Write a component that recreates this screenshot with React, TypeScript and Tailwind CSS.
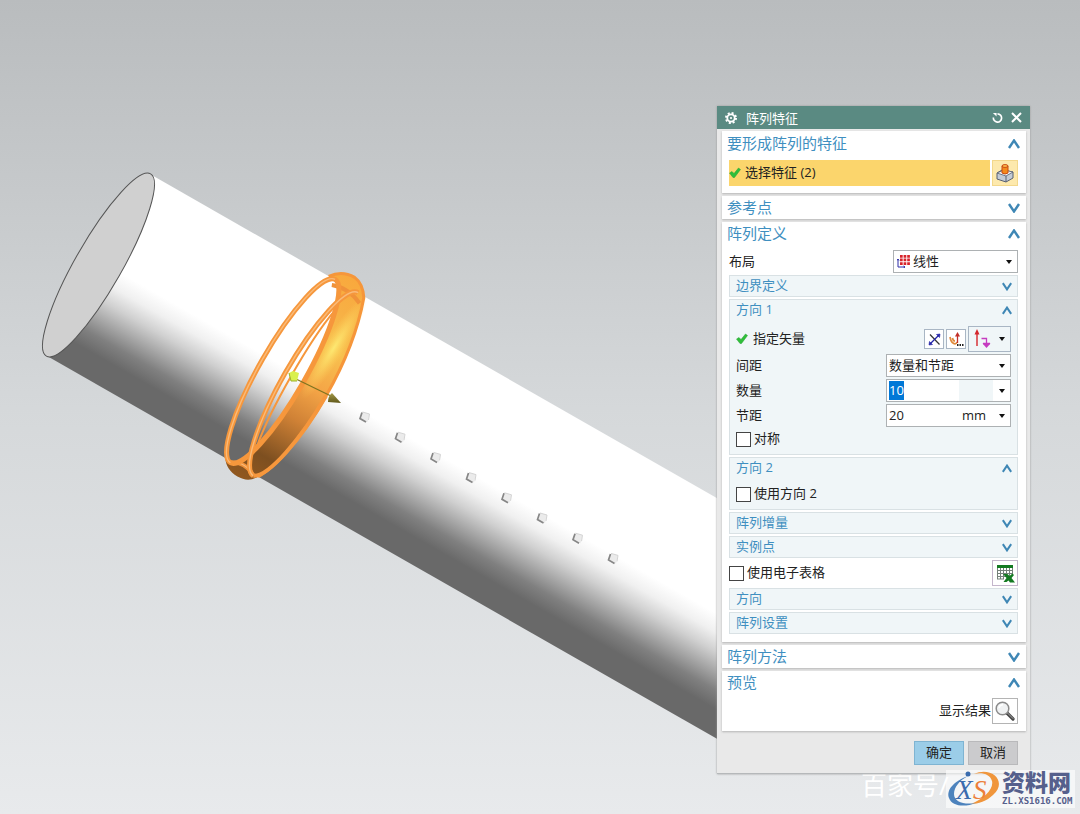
import { useEffect, useRef, useState } from "react";
import type { ReactNode } from "react";

function Chevron({ open, small }: { open: boolean; small?: boolean }) {
  return (
    <svg
      className={small ? "w-[10px] h-[9px]" : "w-3 h-[10px]"}
      viewBox="0 0 12 10"
      fill="none"
      stroke="#3f87b5"
      strokeWidth="2.4"
    >
      <path d={open ? "M1 9 L6 1.5 L11 9" : "M1 1 L6 8.5 L11 1"} />
    </svg>
  );
}

function Arrow() {
  return (
    <svg className="w-[6px] h-[4px]" viewBox="0 0 6 4">
      <path d="M0 0 H6 L3 4 Z" fill="#111" />
    </svg>
  );
}

function Check() {
  return (
    <svg className="w-[12px] h-[12px]" viewBox="0 0 12 12">
      <path d="M.5 6 L3 4.5 L5 6.5 L9.5 1 L11.5 2.5 L5.5 10.5 L4 10.5 Z" fill="#2fbf3a" stroke="#25a030" strokeWidth=".5" />
    </svg>
  );
}

function Card({ title, open, className, children }: { title: string; open: boolean; className?: string; children?: ReactNode }) {
  return (
    <section className={"bg-white shadow-[0_1px_2px_#b4b4b4] pl-[7px] pr-2 " + (className || "")}>
      <h2>
        <button className="flex items-center justify-between w-full h-[23px] text-[15px] text-[#3f8fc0]">
          <span className="-ml-[2px]">{title}</span>
          <span className="-mr-[2px]">
            <Chevron open={open} />
          </span>
        </button>
      </h2>
      {children}
    </section>
  );
}

function SubGroup({ title, children }: { title: string; children?: ReactNode }) {
  return (
    <section className="bg-[#f0f6f8] border border-[#d9e1e4] px-[6px]">
      <h3>
        <button className="flex items-center justify-between w-full h-5 text-[13px] text-[#3f8fc0]">
          {title}
          <span className="-mr-px">
            <Chevron open={!!children} small />
          </span>
        </button>
      </h3>
      {children && <div className="flex flex-col gap-[2px] pt-[6px] pb-[5px]">{children}</div>}
    </section>
  );
}

function CheckRow({ id, label }: { id: string; label: string }) {
  return (
    <div className="flex items-center gap-[3px] h-5">
      <input
        id={id}
        type="checkbox"
        className="appearance-none w-[15px] h-[15px] border border-[#444] bg-white checked:bg-[#3f8fc0]"
      />
      <label htmlFor={id}>{label}</label>
    </div>
  );
}

function GearIcon() {
  return (
    <svg className="w-3 h-3" viewBox="0 0 12 12" fill="none" stroke="#fff">
      <circle cx="6" cy="6" r="5" strokeWidth="2" strokeDasharray="2 1.93" />
      <circle cx="6" cy="6" r="3.7" strokeWidth="1.8" />
      <circle cx="6" cy="6" r="1.1" fill="#fff" stroke="none" />
    </svg>
  );
}

function FeatureIcon() {
  return (
    <svg className="w-[18px] h-[19px]" viewBox="0 0 18 19">
      <path d="M1 9 L6 6 L17 8 V14 L10 18 L1 15 Z" fill="#c3cbd6" stroke="#586070" />
      <path d="M1 9 L10 12 L17 8 L8 6 Z" fill="#f0f3f7" stroke="#586070" strokeWidth=".8" />
      <path d="M10 12 V18" stroke="#586070" />
      <path d="M6 2 V9 Q9 11 12 9 V2 Z" fill="#f48a1c" stroke="#c84a12" />
      <ellipse cx="9" cy="2" rx="3" ry="1.4" fill="#ffc04d" stroke="#c84a12" />
    </svg>
  );
}

function LinearIcon() {
  return (
    <svg className="w-[13px] h-[13px]" viewBox="0 0 13 13">
      <g fill="#d8232a">
        <path d="M3 0h2.7v2.7H3z M6.6 0h2.7v2.7H6.6z M10.2 0h2.7v2.7h-2.7z" />
        <path d="M3 3.6h2.7v2.7H3z M6.6 3.6h2.7v2.7H6.6z M10.2 3.6h2.7v2.7h-2.7z" />
        <path d="M3 7.2h2.7v2.7H3z M6.6 7.2h2.7v2.7H6.6z M10.2 7.2h2.7v2.7h-2.7z" />
      </g>
      <path d="M1 4 V12 H8 M0 5.5 L1 4 L2 5.5 M6.5 11 L8 12 L6.5 13" fill="none" stroke="#2e2ea8" />
    </svg>
  );
}

function ReverseIcon() {
  return (
    <svg className="w-[13px] h-[13px]" viewBox="0 0 13 13">
      <path d="M2 1.5 L11.5 11.5" stroke="#333" strokeWidth="1.2" />
      <path d="M3 10 L10 3" stroke="#2222a8" strokeWidth="1.3" />
      <path d="M12 1 L11.5 4.5 L8.5 1.5 Z M1 12 L1.5 8.5 L4.5 11.5 Z" fill="#2222a8" stroke="#2222a8" strokeWidth=".6" />
    </svg>
  );
}

function VectorDialogIcon() {
  return (
    <svg className="w-[15px] h-[15px]" viewBox="0 0 15 15" fill="none">
      <path d="M1 5 Q2 10 4 11 Q7 13 8 10 M3.5 6 Q4 9 6 9" stroke="#e08a3c" strokeWidth="1.7" />
      <path d="M8.5 11 V4" stroke="#c22f28" strokeWidth="1.3" />
      <path d="M8.5 0 L11 4.5 H6 Z" fill="#c22f28" />
      <path d="M8 13h1.5 M10.5 13H12 M13 13h1.5" stroke="#222" strokeWidth="1.8" />
    </svg>
  );
}

function AxisIcon() {
  return (
    <svg className="w-[18px] h-[20px]" viewBox="0 0 18 20" fill="none">
      <path d="M4 17 V4" stroke="#d4262c" strokeWidth="1.4" />
      <path d="M4 0 L6.5 5.5 H1.5 Z" fill="#d4262c" />
      <path d="M8.5 9.5 H13.5 V15 M10 14.5 H17" stroke="#c53cc0" strokeWidth="1.3" />
      <path d="M9.5 14.5 H17.5 L13.5 19 Z" fill="#c53cc0" />
    </svg>
  );
}

function SheetIcon() {
  return (
    <svg className="w-[19px] h-[19px]" viewBox="0 0 19 19">
      <path d="M1 1 H17 V14 H1 Z" fill="#fff" />
      <path d="M1.5 4 V15 M4.5 4 V15 M7.5 4 V15 M10.5 4 V12 M13.5 4 V12 M16.5 4 V12 M1 6.5 H17 M1 9.5 H17 M1 12.5 H10 M1 15 H8" stroke="#75817a" />
      <path d="M1 1 H17 V4 H1 Z" fill="#147a22" />
      <path d="M7 10 H11.5 L13.5 12 L16.5 9.5 L18 11 L15.5 14 L19 18.5 H14 L12.5 16.5 L10.5 18 H7.5 L10.5 14 Z" fill="#147a22" />
    </svg>
  );
}

function MagnifierIcon() {
  return (
    <svg className="w-[20px] h-[20px]" viewBox="0 0 20 20">
      <path d="M12 12 L18 18" stroke="#444" strokeWidth="3.2" strokeLinecap="round" />
      <path d="M12.5 12 L18 17.5" stroke="#aaa" strokeLinecap="round" />
      <circle cx="7.5" cy="7.5" r="6.3" fill="#f0f2f3" stroke="#8b8b8b" strokeWidth="1.5" />
      <path d="M4 7 Q4.5 4 8 3.8" fill="none" stroke="#fff" strokeWidth="1.5" />
    </svg>
  );
}

const instances = [0, 1, 2, 3, 4, 5, 6, 7];

function Scene() {
  return (
    <svg className="absolute left-0 top-0 w-[1080px] h-[814px]" viewBox="0 0 1080 814" fill="none">
      <defs>
        <linearGradient id="body" x1="0" y1="0" x2="0" y2="1">
          <stop offset="0" stopColor="#fff" />
          <stop offset=".48" stopColor="#fff" />
          <stop offset=".56" stopColor="#f0f0f0" />
          <stop offset=".64" stopColor="#d0d0d0" />
          <stop offset=".72" stopColor="#a8a8a8" />
          <stop offset=".8" stopColor="#808080" />
          <stop offset=".88" stopColor="#696969" />
          <stop offset="1" stopColor="#696969" />
        </linearGradient>
        <linearGradient id="ring" gradientUnits="userSpaceOnUse" x1="0" y1="-119" x2="0" y2="119">
          <stop offset="0" stopColor="#f9a83c" />
          <stop offset=".16" stopColor="#f7b045" />
          <stop offset=".32" stopColor="#f8c04e" />
          <stop offset=".5" stopColor="#f4a446" />
          <stop offset=".65" stopColor="#d08236" />
          <stop offset=".85" stopColor="#7d4f20" />
          <stop offset="1" stopColor="#94591f" />
        </linearGradient>
        <radialGradient id="glow">
          <stop offset="0" stopColor="#fff27a" stopOpacity=".8" />
          <stop offset="1" stopColor="#fdd75c" stopOpacity="0" />
        </radialGradient>
        <linearGradient id="cone" x1="0" y1="0" x2="0" y2="1">
          <stop offset="0" stopColor="#a59a4a" />
          <stop offset="1" stopColor="#5f5718" />
        </linearGradient>
      </defs>

      {/* shaft */}
      <g transform="translate(98.5 265) rotate(29.75)">
        <rect x="0" y="-104.5" width="820" height="209" fill="url(#body)" />
        <ellipse rx="23.4" ry="105" fill="#d0d0d0" stroke="#555" />
      </g>

      {/* selected ring */}
      <g transform="translate(294 377.5) rotate(29.75)">
        <path
          d="M-20 -105 C-15 -112 -7 -117 3 -117 C12 -116 17 -110 21 -104 C33 -70 37 -35 37 0 C37 40 30 85 18 104 C14 111 8 114 0 114 C-10 114 -18 109 -21 101 L-13 105.5 A23.4 105.5 0 0 0 -13 -105.5 Z"
          fill="url(#ring)"
        />
        <ellipse cx="20" cy="-46" rx="11" ry="60" transform="rotate(2 20 -46)" fill="url(#glow)" />
        <path
          d="M-20 -105 C-15 -112 -7 -117 3 -117 C12 -116 17 -110 21 -104 C33 -70 37 -35 37 0 C37 40 30 85 18 104"
          stroke="#f6963a"
          strokeWidth="3"
        />
        <path d="M-13 -99 Q2 -105 20 -97 M-13 105 Q0 97 13 105" stroke="#f0923a" strokeWidth="4" />
        <path d="M-13 105 Q0 97 13 105" stroke="#f9bb7a" />
        <ellipse cx="-13" rx="23.4" ry="105.5" stroke="#f6973c" strokeWidth="5" />
        <path d="M-13 105.5 A23.4 105.5 0 0 1 -13 -105.5" stroke="#f9bb7a" strokeWidth="1.4" />
        <path d="M13.5 105.5 A23.4 105.5 0 0 1 13.5 -105.5" stroke="#f6973c" strokeWidth="5" />
        <path d="M13.5 105.5 A23.4 105.5 0 0 1 13.5 -105.5" stroke="#f9bb7a" strokeWidth="1.4" />
        <path d="M13.5 105.5 C27 99 36.9 50 36.9 0" stroke="#f6973c" strokeWidth="4" />
        {/* inner edge of the groove */}
        <path d="M2 78 C-5 40 -5 -40 2 -78" stroke="#f6973c" strokeWidth="2" />
      </g>

      {/* direction handle */}
      <path d="M296 379 L331 396" stroke="#7e7420" strokeWidth="1.3" />
      <path d="M341 403 L328 402 Q328 396 332 393 Z" fill="url(#cone)" />
      <path d="M289 373 L293 371 L299 373 L297 381 L291 381 Z" fill="#d9f04e" />
      <path d="M289 373 L291 381 L297 381" stroke="#9bb02c" />

      {/* pattern instances */}
      {instances.map((i) => (
        <g key={i} transform={`translate(${364.5 + i * 35.5} ${417 + i * 20.2})`}>
          <path d="M-2 -5 L5 -3 L3 5 L-4 3 Z" fill="#ebebeb" />
          <path d="M-2 -5 L5 -3 L4 3" stroke="#d4d4d4" />
          <path d="M-2.5 -4.5 L-4.5 1.5 L1.5 5" stroke="#868686" strokeWidth="1.7" />
        </g>
      ))}
    </svg>
  );
}

function SiteLogo() {
  return (
    <div className="absolute left-[946px] top-[770px] flex items-center w-[129px] h-[38px] bg-white/60">
      <svg className="w-[56px] h-[38px]" viewBox="0 0 56 38" fill="none">
        <path d="M28 4 C46 -4 62 12 47 25 C41 31 32 34 25 34 C38 29 48 19 46 11 C44 4 36 2 28 4 Z" fill="#f0963c" />
        <path d="M22 6 C8 11 0 20 3 28 C6 37 20 37 30 33 C18 35 8 32 8 24 C8 17 14 10 22 6 Z" fill="#4d83bd" />
        <circle cx="22" cy="4" r="2.5" fill="#3b6cae" />
        <text x="10" y="29" fontFamily="Liberation Serif, serif" fontStyle="italic" fontSize="27" fill="#3b6cae">X</text>
        <text x="27" y="29" fontFamily="Liberation Serif, serif" fontStyle="italic" fontSize="27" fill="#ec7f3a">S</text>
      </svg>
      <div className="text-[#56608c] font-bold whitespace-nowrap">
        <div className="text-[23px] leading-[25px] font-black">资料网</div>
        <div className="font-['DejaVu_Sans_Mono',monospace] text-[9px] leading-[13px]">ZL.XS1616.COM</div>
      </div>
    </div>
  );
}

export default function App() {
  const [count, setCount] = useState("10");
  const [pitch, setPitch] = useState("20");
  const countRef = useRef<HTMLInputElement>(null);

  useEffect(() => {
    countRef.current?.focus();
    countRef.current?.select();
  }, []);

  return (
    <main className="relative min-h-screen overflow-hidden bg-linear-to-b from-[#b9bcbe] via-[#d5d8da] to-[#e8eaec] font-['Open_Sans','Noto_Sans_CJK_SC',sans-serif] text-[13px] text-[#222]">
      <Scene />

      <div className="absolute left-[861px] top-[770px] text-[26px] leading-[30px] text-white">百家号/</div>

      <div className="relative flex justify-end pt-[106px] pr-[50px]">
        <div role="dialog" aria-label="阵列特征" className="w-[313px] bg-[#e9e9e9] border-b border-[#b5b8ba] shadow-[0_0_2px_#999]">
          <header className="flex items-center h-[23px] pl-2 pr-2 bg-[#5a8a82] text-white">
            <GearIcon />
            <h1 className="ml-[9px] text-[13px] leading-5">阵列特征</h1>
            <button aria-label="重置" className="ml-auto">
              <svg className="w-[11px] h-[11px]" viewBox="0 0 12 12" fill="none" stroke="#fff" strokeWidth="1.8">
                <path d="M1.5 6 A4.5 4.5 0 1 0 6 2" />
                <path d="M1 1 H5 V5 Z" fill="#fff" stroke="none" />
              </svg>
            </button>
            <button aria-label="关闭" className="ml-2">
              <svg className="w-[11px] h-[11px]" viewBox="0 0 11 11" stroke="#fff" strokeWidth="2">
                <path d="M1 1 L10 10 M10 1 L1 10" />
              </svg>
            </button>
          </header>

          <div className="flex flex-col gap-[3px] pt-[2px] pl-[5px] pr-1">
            <Card title="要形成阵列的特征" open className="pt-px pb-[7px]">
              <div className="flex gap-[2px] h-[26px] mt-[5px]">
                <div className="flex flex-1 items-center gap-1 bg-[#fbd56c]">
                  <Check />
                  选择特征 (2)
                </div>
                <button aria-label="特征" className="flex items-center justify-center w-[26px] bg-[#fde9ad] border border-[#f3d88c]">
                  <FeatureIcon />
                </button>
              </div>
            </Card>

            <Card title="参考点" open={false} />

            <Card title="阵列定义" open className="pb-2">
              <div className="flex flex-col gap-[2px] mt-[5px]">
                <div className="flex items-center justify-between h-[23px]">
                  <label htmlFor="layout">布局</label>
                  <div className="relative w-[125px]">
                    <select id="layout" className="appearance-none w-full h-[23px] pl-[19px] bg-white border border-[#adb1b3]">
                      <option>线性</option>
                    </select>
                    <span className="absolute left-1 top-[5px] pointer-events-none">
                      <LinearIcon />
                    </span>
                    <span className="absolute right-[6px] top-[10px] pointer-events-none">
                      <Arrow />
                    </span>
                  </div>
                </div>

                <SubGroup title="边界定义" />

                <SubGroup title="方向 1">
                  <div className="flex items-center h-[26px]">
                    <Check />
                    <span className="ml-[5px] mr-auto">指定矢量</span>
                    <button aria-label="反向" className="flex items-center justify-center w-5 h-5 bg-white border border-[#a9b6c4]">
                      <ReverseIcon />
                    </button>
                    <button aria-label="矢量对话框" className="flex items-center justify-center w-5 h-5 ml-[2px] bg-white border border-[#a9b6c4]">
                      <VectorDialogIcon />
                    </button>
                    <button aria-label="自动判断的矢量" className="flex items-center justify-between w-[43px] h-[26px] ml-[2px] pl-1 pr-[5px] border border-[#a9b6c4]">
                      <AxisIcon />
                      <Arrow />
                    </button>
                  </div>

                  <div className="flex items-center justify-between h-[23px]">
                    <label htmlFor="spacing">间距</label>
                    <div className="relative w-[125px]">
                      <select id="spacing" className="appearance-none w-full h-[23px] pl-[2px] bg-white border border-[#adb1b3]">
                        <option>数量和节距</option>
                      </select>
                      <span className="absolute right-[6px] top-[10px] pointer-events-none">
                        <Arrow />
                      </span>
                    </div>
                  </div>

                  <div className="flex items-center justify-between h-[23px]">
                    <label htmlFor="count">数量</label>
                    <div className="flex w-[125px] h-[23px] bg-white border border-[#adb1b3]">
                      <input
                        id="count"
                        ref={countRef}
                        value={count}
                        onChange={(e) => setCount(e.target.value)}
                        className="w-[72px] pl-[2px] outline-none selection:bg-[#0078d7] selection:text-white"
                      />
                      <span className="w-[34px] bg-[#f0f6f8]" />
                      <button aria-label="数量选项" className="flex flex-1 items-center justify-center">
                        <Arrow />
                      </button>
                    </div>
                  </div>

                  <div className="flex items-center justify-between h-[23px]">
                    <label htmlFor="pitch">节距</label>
                    <div className="flex w-[125px] h-[23px] bg-white border border-[#adb1b3]">
                      <input
                        id="pitch"
                        value={pitch}
                        onChange={(e) => setPitch(e.target.value)}
                        className="w-[72px] pl-[2px] outline-none"
                      />
                      <span className="w-[34px] pl-[3px] leading-[21px]">mm</span>
                      <button aria-label="节距选项" className="flex flex-1 items-center justify-center">
                        <Arrow />
                      </button>
                    </div>
                  </div>

                  <CheckRow id="symmetric" label="对称" />
                </SubGroup>

                <SubGroup title="方向 2">
                  <CheckRow id="direction2" label="使用方向 2" />
                </SubGroup>

                <SubGroup title="阵列增量" />
                <SubGroup title="实例点" />

                <div className="flex items-center justify-between h-[26px]">
                  <CheckRow id="sheet" label="使用电子表格" />
                  <button aria-label="电子表格" className="flex items-center justify-center w-[26px] h-[26px] bg-white border border-[#c4b6cc]">
                    <SheetIcon />
                  </button>
                </div>

                <SubGroup title="方向" />
                <SubGroup title="阵列设置" />
              </div>
            </Card>

            <Card title="阵列方法" open={false} />

            <Card title="预览" open className="pb-[7px]">
              <div className="flex items-center justify-end gap-px h-[26px] mt-1">
                <span id="preview">显示结果</span>
                <button aria-labelledby="preview" className="flex items-center justify-center w-[26px] h-[26px] bg-white border border-[#b4b4b4]">
                  <MagnifierIcon />
                </button>
              </div>
            </Card>
          </div>

          <footer className="flex justify-end gap-1 pt-[10px] pb-2 pr-3">
            <button className="w-[50px] h-6 bg-[#9bcde8] border border-[#7fb4d2]">确定</button>
            <button className="w-[50px] h-6 bg-[#cbcbcd] border border-[#b9b9bb]">取消</button>
          </footer>
        </div>
      </div>

      <SiteLogo />
    </main>
  );
}
